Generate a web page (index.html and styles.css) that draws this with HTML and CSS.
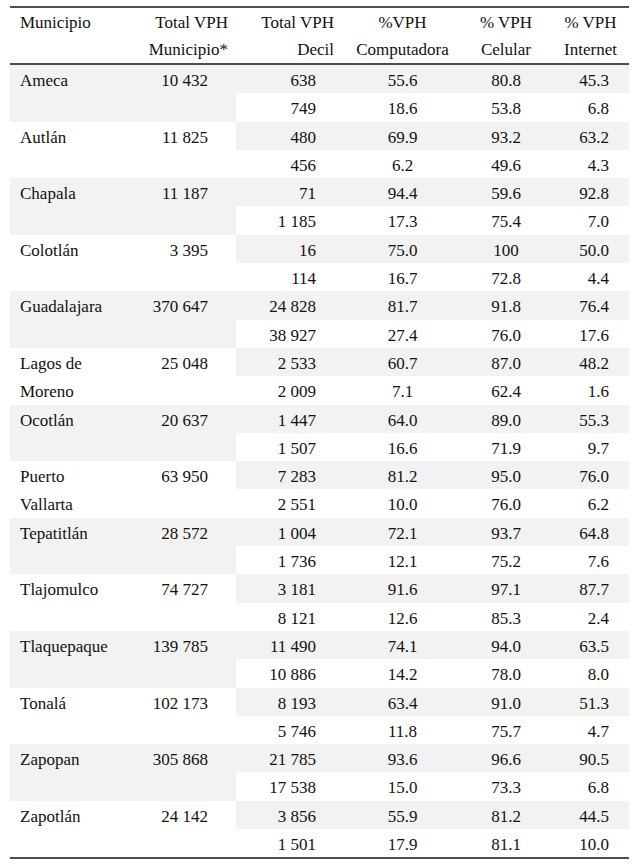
FILE: index.html
```html
<!DOCTYPE html>
<html lang="es">
<head>
<meta charset="utf-8">
<title>VPH por municipio</title>
<link rel="stylesheet" href="styles.css">
</head>
<body>
<table class="tbl">
  <colgroup>
    <col class="c1"><col class="c2"><col class="c3"><col class="c4"><col class="c5"><col class="c6">
  </colgroup>
  <thead>
    <tr>
      <th class="h1">Municipio</th>
      <th class="h2">Total VPH<br>Municipio*</th>
      <th class="h3">Total VPH<br>Decil</th>
      <th class="h4">%VPH<br>Computadora</th>
      <th class="h5">% VPH<br>Celular</th>
      <th class="h6">% VPH<br>Internet</th>
    </tr>
  </thead>
  <tbody class="odd">
    <tr class="r1"><td class="k n">Ameca</td><td class="k t">10 432</td><td class="v d">638</td><td class="v p4">55.6</td><td class="v p5">80.8</td><td class="v p6">45.3</td></tr>
    <tr class="r2"><td class="k n"></td><td class="k t"></td><td class="v d">749</td><td class="v p4">18.6</td><td class="v p5">53.8</td><td class="v p6">6.8</td></tr>
  </tbody>
  <tbody class="even">
    <tr class="r1"><td class="k n">Autlán</td><td class="k t">11 825</td><td class="v d">480</td><td class="v p4">69.9</td><td class="v p5">93.2</td><td class="v p6">63.2</td></tr>
    <tr class="r2"><td class="k n"></td><td class="k t"></td><td class="v d">456</td><td class="v p4">6.2</td><td class="v p5">49.6</td><td class="v p6">4.3</td></tr>
  </tbody>
  <tbody class="odd">
    <tr class="r1"><td class="k n">Chapala</td><td class="k t">11 187</td><td class="v d">71</td><td class="v p4">94.4</td><td class="v p5">59.6</td><td class="v p6">92.8</td></tr>
    <tr class="r2"><td class="k n"></td><td class="k t"></td><td class="v d">1 185</td><td class="v p4">17.3</td><td class="v p5">75.4</td><td class="v p6">7.0</td></tr>
  </tbody>
  <tbody class="even">
    <tr class="r1"><td class="k n">Colotlán</td><td class="k t">3 395</td><td class="v d">16</td><td class="v p4">75.0</td><td class="v p5">100</td><td class="v p6">50.0</td></tr>
    <tr class="r2"><td class="k n"></td><td class="k t"></td><td class="v d">114</td><td class="v p4">16.7</td><td class="v p5">72.8</td><td class="v p6">4.4</td></tr>
  </tbody>
  <tbody class="odd">
    <tr class="r1"><td class="k n">Guadalajara</td><td class="k t">370 647</td><td class="v d">24 828</td><td class="v p4">81.7</td><td class="v p5">91.8</td><td class="v p6">76.4</td></tr>
    <tr class="r2"><td class="k n"></td><td class="k t"></td><td class="v d">38 927</td><td class="v p4">27.4</td><td class="v p5">76.0</td><td class="v p6">17.6</td></tr>
  </tbody>
  <tbody class="even">
    <tr class="r1"><td class="k n">Lagos de</td><td class="k t">25 048</td><td class="v d">2 533</td><td class="v p4">60.7</td><td class="v p5">87.0</td><td class="v p6">48.2</td></tr>
    <tr class="r2"><td class="k n">Moreno</td><td class="k t"></td><td class="v d">2 009</td><td class="v p4">7.1</td><td class="v p5">62.4</td><td class="v p6">1.6</td></tr>
  </tbody>
  <tbody class="odd">
    <tr class="r1"><td class="k n">Ocotlán</td><td class="k t">20 637</td><td class="v d">1 447</td><td class="v p4">64.0</td><td class="v p5">89.0</td><td class="v p6">55.3</td></tr>
    <tr class="r2"><td class="k n"></td><td class="k t"></td><td class="v d">1 507</td><td class="v p4">16.6</td><td class="v p5">71.9</td><td class="v p6">9.7</td></tr>
  </tbody>
  <tbody class="even">
    <tr class="r1"><td class="k n">Puerto</td><td class="k t">63 950</td><td class="v d">7 283</td><td class="v p4">81.2</td><td class="v p5">95.0</td><td class="v p6">76.0</td></tr>
    <tr class="r2"><td class="k n">Vallarta</td><td class="k t"></td><td class="v d">2 551</td><td class="v p4">10.0</td><td class="v p5">76.0</td><td class="v p6">6.2</td></tr>
  </tbody>
  <tbody class="odd">
    <tr class="r1"><td class="k n">Tepatitlán</td><td class="k t">28 572</td><td class="v d">1 004</td><td class="v p4">72.1</td><td class="v p5">93.7</td><td class="v p6">64.8</td></tr>
    <tr class="r2"><td class="k n"></td><td class="k t"></td><td class="v d">1 736</td><td class="v p4">12.1</td><td class="v p5">75.2</td><td class="v p6">7.6</td></tr>
  </tbody>
  <tbody class="even">
    <tr class="r1"><td class="k n">Tlajomulco</td><td class="k t">74 727</td><td class="v d">3 181</td><td class="v p4">91.6</td><td class="v p5">97.1</td><td class="v p6">87.7</td></tr>
    <tr class="r2"><td class="k n"></td><td class="k t"></td><td class="v d">8 121</td><td class="v p4">12.6</td><td class="v p5">85.3</td><td class="v p6">2.4</td></tr>
  </tbody>
  <tbody class="odd">
    <tr class="r1"><td class="k n">Tlaquepaque</td><td class="k t">139 785</td><td class="v d">11 490</td><td class="v p4">74.1</td><td class="v p5">94.0</td><td class="v p6">63.5</td></tr>
    <tr class="r2"><td class="k n"></td><td class="k t"></td><td class="v d">10 886</td><td class="v p4">14.2</td><td class="v p5">78.0</td><td class="v p6">8.0</td></tr>
  </tbody>
  <tbody class="even">
    <tr class="r1"><td class="k n">Tonalá</td><td class="k t">102 173</td><td class="v d">8 193</td><td class="v p4">63.4</td><td class="v p5">91.0</td><td class="v p6">51.3</td></tr>
    <tr class="r2"><td class="k n"></td><td class="k t"></td><td class="v d">5 746</td><td class="v p4">11.8</td><td class="v p5">75.7</td><td class="v p6">4.7</td></tr>
  </tbody>
  <tbody class="odd">
    <tr class="r1"><td class="k n">Zapopan</td><td class="k t">305 868</td><td class="v d">21 785</td><td class="v p4">93.6</td><td class="v p5">96.6</td><td class="v p6">90.5</td></tr>
    <tr class="r2"><td class="k n"></td><td class="k t"></td><td class="v d">17 538</td><td class="v p4">15.0</td><td class="v p5">73.3</td><td class="v p6">6.8</td></tr>
  </tbody>
  <tbody class="even">
    <tr class="r1"><td class="k n">Zapotlán</td><td class="k t">24 142</td><td class="v d">3 856</td><td class="v p4">55.9</td><td class="v p5">81.2</td><td class="v p6">44.5</td></tr>
    <tr class="r2"><td class="k n"></td><td class="k t"></td><td class="v d">1 501</td><td class="v p4">17.9</td><td class="v p5">81.1</td><td class="v p6">10.0</td></tr>
  </tbody>
</table>
</body>
</html>
```

FILE: styles.css
```css
html, body {
  margin: 0;
  padding: 0;
  background: #ffffff;
}

body {
  font-family: "Liberation Serif", "Times New Roman", serif;
  font-size: 17px;
  color: #111111;
}

.tbl {
  margin: 6px 0 0 10px;
  width: 619px;
  table-layout: fixed;
  border-collapse: collapse;
  border-top: 2px solid #4d4d4d;
  border-bottom: 2px solid #4d4d4d;
}

.c1 { width: 120px; }
.c2 { width: 106px; }
.c3 { width: 109px; }
.c4 { width: 115px; }
.c5 { width: 92px; }
.c6 { width: 77px; }

.tbl thead tr {
  border-bottom: 2px solid #4d4d4d;
}

.tbl th {
  font-weight: normal;
  padding: 2px 0 0 0;
  line-height: 26.5px;
  vertical-align: top;
  white-space: nowrap;
}

.tbl th.h1 { text-align: left; padding-left: 10px; }
.tbl th.h2 { text-align: right; padding-right: 8px; }
.tbl th.h3 { text-align: right; padding-right: 11px; }
.tbl th.h4 { text-align: center; }
.tbl th.h5 { text-align: center; }
.tbl th.h6 { text-align: center; }

.tbl td {
  height: 28.3px;
  box-sizing: border-box;
  padding: 4px 0 0 0;
  line-height: 24.3px;
  vertical-align: top;
  white-space: nowrap;
}

.tbl td.n { text-align: left; padding-left: 10px; }
.tbl td.t { text-align: right; padding-right: 28px; }
.tbl td.d { text-align: right; padding-right: 29px; }
.tbl td.p4 { text-align: center; }
.tbl td.p5 { text-align: center; }
.tbl td.p6 { text-align: right; padding-right: 20px; }

tbody.odd td.k { background: #f2f2f2; }
tr.r1 td.v { background: #f2f2f2; }
```
